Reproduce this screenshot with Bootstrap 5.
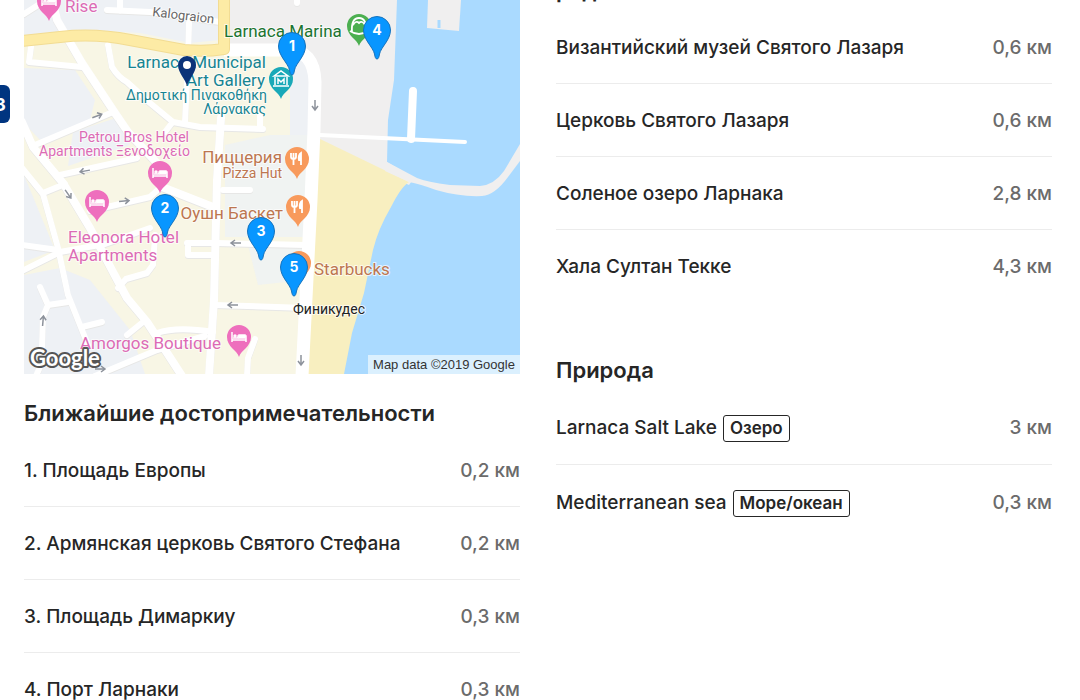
<!DOCTYPE html>
<html lang="ru">
<head>
<meta charset="utf-8">
<meta name="viewport" content="width=device-width, initial-scale=1">
<title>Окрестности отеля</title>
<link href="https://cdn.jsdelivr.net/npm/bootstrap@5.3.0/dist/css/bootstrap.min.css" rel="stylesheet">
<style>
  body { font-family: Inter, "Liberation Sans", sans-serif; font-size: 19px; color: #262626; background: #fff; overflow-x: hidden; }
  .page-area { padding: 0 28px 0 24px; overflow: hidden; }
  .page-area > .row { --bs-gutter-x: 36px; }
  .area-map { display: block; width: 100%; height: auto; font-family: Roboto, sans-serif; }
  .area-map text { paint-order: stroke; stroke: #fff; stroke-opacity: .7; stroke-width: 2px; stroke-linejoin: round; }
  .area-map .pin-num { font: 700 14px Inter, sans-serif; fill: #fff; stroke: none; text-anchor: middle; }
  .area-map .logo-text { font: 700 22px Lato, sans-serif; fill: #fff; stroke: #555; stroke-opacity: 1; stroke-width: 4px; }
  .area-map .credit { font: 13px "Liberation Sans", sans-serif; fill: #333; stroke: none; text-anchor: middle; }
  .area-title { font-size: 22px; line-height: 28px; font-weight: 600; margin: 0 0 8px; }
  .title-map { margin-top: 24px; }
  .title-next { margin-top: 52px; }
  .title-cut { margin-top: -25px; }
  .title-map, .title-next { padding-top: 1px; margin-bottom: 7px; }
  .title-cut { padding-top: 1px; margin-bottom: 7px; }
  .place { height: 73px; padding-top: 2px; border-bottom: 1px solid #ececec; font-weight: 500; }
  .place.tagged { height: 74px; }
  .place:last-child { border-bottom: 0; }
  .place-km { color: #6b6b6b; white-space: nowrap; }
  .place-tag { border: 1px solid #262626; border-radius: 3px; font-size: 17px; line-height: 25px; font-weight: 600; padding: 0 6px; margin-left: 6px; }
  .side-tab { left: -28px; top: 85px; width: 38px; height: 38px; border: 0; border-radius: 6px; background: #003580; color: #fff; font-size: 18px; font-weight: 700; text-align: right; padding: 0 4px; }
</style>
</head>
<body>
<button type="button" class="side-tab position-absolute z-1" aria-label="Оценка">8,3</button>
<main class="page-area">
  <div class="row">
    <section class="col-6">
      <svg class="area-map" viewBox="24 0 496 374" role="img" aria-label="Карта окрестностей">
        <defs>
          <path id="pinBlue" d="M0 29C-1.500 29-2 27-2.500 24C-4 17-13.500 10-13.500 0A13.500 13.500 0 0 1 13.500 0C13.500 10 4 17 2.500 24C2 27 1.500 29 0 29Z" fill="#0896ff" stroke="#1673bd" stroke-width="1"/>
          <path id="pinPoi" d="M0 20C-2 13-12 10-12 0A12 12 0 0 1 12 0C12 10 2 13 0 20Z"/>
          <g id="bed" fill="none" stroke="#fff" stroke-width="1.500"><path d="M-7-5V5M-7 3H7V5M7 3V-1H-1V1H-6"/><path d="M0-2H6V1H0Z" fill="#fff"/><circle cx="-4" cy="-1" r="1"/></g>
          <g id="fork" fill="none" stroke="#fff" stroke-width="1.800"><path d="M-6-6V-2Q-6 0-3.500 0Q-1 0-1-2V-6M-3.500-6V6"/><path d="M4 6V-6Q1-4 2 1H4" fill="#fff"/></g>
          <path id="arrow" d="M-5 0H5M1-3L5 0L1 3" fill="none" stroke="#8d929b" stroke-width="1.500"/>
          <g id="streets" fill="none" stroke-linejoin="round" stroke-linecap="round">
            <g stroke-width="8">
              <path d="M52 -2L57 20L82 63L115 113L128 132L157 163L162 187L213 207"/>
              <path d="M22 122L33 147L63 183L90 228L113 272L127 298L147 322L182 376"/>
              <path d="M221 118L217 180L214 300L209 376"/>
            </g>
            <g stroke-width="6">
              <path d="M108 45L112 67Q118 77 127 82L150 103L173 122L200 127L263 129"/>
              <path d="M189 23L188 60L185 122M107 10L150 12L220 22M120 11V-2M24 14L46 0"/>
              <path d="M31 47L29 62L82 67M35 145L113 112M60 175L137 158M165 132L172 123"/>
              <path d="M22 168L43 194L58 248L68 295L80 325L88 345"/>
              <path d="M43 193L65 184M22 245L58 250M22 271L60 252L105 244L150 228"/>
              <path d="M90 211L150 197L161 187M155 235L153 265L147 273L126 279L118 288"/>
              <path d="M187 243H215M188 243V255H215M216 243L305 245M214 305L306 308"/>
              <path d="M127 335L143 322M157 333Q177 326 213 332M223 190H250M260 116V128"/>
              <path d="M40 287L48 305L68 302M48 305L43 317L42 347M82 327L102 322M95 376L157 350L205 336"/>
              <path d="M255 339L248 358L247 376M36 376L44 358M297 -2V3"/>
            </g>
          </g>
        </defs>
        <rect x="24" width="496" height="374" fill="#aadaff"/>
        <path d="M24 0H320V374H24Z" fill="#f8f6e5"/>
        <g fill="#eef1f5">
          <path d="M24 0H228L220 40L190 43L140 33L90 30L24 36Z"/>
          <path d="M24 68L75 70L95 100L90 120L40 140L24 123Z"/>
          <path d="M73 132L116 118L130 145L68 166Z"/>
          <path d="M24 175L55 250L24 262Z"/>
          <path d="M24 275L60 268L90 280L130 330L145 374H24Z"/>
          <path d="M225 145L270 135H308V237H225ZM248 245L305 248V280L258 285Z" opacity=".75"/>
          <path d="M290 58H309V135H290Z"/>
        </g>
        <path d="M228 0H397L394 80L388 120L387 162L414 178L409 185L320 145L309 52H228Z" fill="#f0efef"/>
        <path d="M318 138L409 182Q401 187 391 207Q378 229 373 250L364 293L352 333L344 374H300Z" fill="#f8efc0"/>
        <path d="M387 162L417 178Q427 182 450 185L480 186Q494 185 504 171L520 144V161L508 177Q495 195 482 196Q460 197 436 190Q420 184 409 182L385 171Z" fill="#f0efef"/>
        <path d="M428 0H461L459 31L427 28Z" fill="#f0efef"/>
        <path d="M439 20V28" stroke="#aadaff" stroke-width="3"/>
        <path d="M320 135L465 142" stroke="#fff" stroke-width="4" stroke-linecap="round"/>
        <path d="M413 91L411 139" stroke="#fff" stroke-width="8" stroke-linecap="round"/>
        <use href="#streets" stroke="#e7e7e6" transform="translate(0 1)"/>
        <use href="#streets" stroke="#fff"/>
        <path d="M224 50H288Q314 50 315 82L314 130L311 200L302 376" fill="none" stroke="#fff" stroke-width="13"/>
        <g fill="none" stroke-linejoin="round">
          <path d="M22 41L60 37Q95 33 130 40L184 50Q205 52 224 49V-2" stroke="#f2dc93" stroke-width="12"/>
          <path d="M22 41L60 37Q95 33 130 40L184 50Q205 52 224 49V-2" stroke="#fdeba5" stroke-width="10"/>
        </g>
        <use href="#arrow" transform="translate(97 116) rotate(-20)"/>
        <use href="#arrow" transform="translate(85 171) rotate(170)"/>
        <use href="#arrow" transform="translate(68 194) rotate(55)"/>
        <use href="#arrow" transform="translate(124 201) rotate(-5)"/>
        <use href="#arrow" transform="translate(236 243) rotate(180)"/>
        <use href="#arrow" transform="translate(233 305) rotate(180)"/>
        <use href="#arrow" transform="translate(43 321) rotate(-85)"/>
        <use href="#arrow" transform="translate(100 369)"/>
        <use href="#arrow" transform="translate(315 105) rotate(90)"/>
        <use href="#arrow" transform="translate(301 360) rotate(90)"/>

        <g fill="#ee6fbd">
          <use href="#pinPoi" x="49" y="1"/><use href="#pinPoi" x="160" y="173"/><use href="#pinPoi" x="97" y="202"/><use href="#pinPoi" x="239" y="337"/>
        </g>
        <use href="#bed" x="49" y="1"/><use href="#bed" x="160" y="173"/><use href="#bed" x="97" y="202"/><use href="#bed" x="239" y="337"/>
        <g fill="#f89a5c"><use href="#pinPoi" x="297" y="159"/><use href="#pinPoi" x="298" y="207"/><use href="#pinPoi" x="299" y="263"/></g>
        <use href="#fork" x="297" y="159"/><use href="#fork" x="298" y="207"/>
        <use href="#pinPoi" x="281" y="79" fill="#19a9b8"/>
        <path d="M274 76L281 71L288 76ZM275 77V85M287 77V85M273 86H289M278 84V79L281 82L284 79V84" fill="none" stroke="#fff" stroke-width="1.500"/>
        <use href="#pinPoi" x="359" y="26" fill="#4caf50"/>
        <path d="M352 32Q351 18 359 18T366 32M353 25Q356 20 359 23Q362 20 365 25M350 31Q359 37 368 31" fill="none" stroke="#fff" stroke-width="1.800"/>

        <text x="65" y="12" font-size="17" fill="#dc6bb5">Rise</text>
        <text x="152" y="16" font-size="13" fill="#666" transform="rotate(7 152 16)">Kalograion</text>
        <text x="224" y="37" font-size="17" fill="#1c7430">Larnaca Marina</text>
        <g fill="#168492" text-anchor="end">
          <text x="266" y="68" font-size="17">Larnaca Municipal</text>
          <text x="265" y="86" font-size="17">Art Gallery</text>
          <text x="267" y="100" font-size="14">Δημοτική Πινακοθήκη</text>
          <text x="266" y="114" font-size="14">Λάρνακας</text>
        </g>
        <g fill="#dc6bb5">
          <text x="189" y="142" font-size="14" text-anchor="end">Petrou Bros Hotel</text>
          <text x="190" y="156" font-size="14" text-anchor="end">Apartments Ξενοδοχείο</text>
          <text x="68" y="243" font-size="17">Eleonora Hotel</text>
          <text x="68" y="261" font-size="17">Apartments</text>
          <text x="80" y="349" font-size="17">Amorgos Boutique</text>
        </g>
        <g fill="#bd7650">
          <text x="282" y="163" font-size="17" text-anchor="end">Пиццерия</text>
          <text x="282" y="178" font-size="14" text-anchor="end">Pizza Hut</text>
          <text x="283" y="219" font-size="17" text-anchor="end">Оушн Баскет</text>
          <text x="314" y="275" font-size="17">Starbucks</text>
        </g>
        <text x="293" y="314" font-size="14" fill="#222">Финикудес</text>

        <path d="M187 86C186 80 178 73 178 65A9 9 0 0 1 196 65C196 73 188 80 187 86Z" fill="#0b3379"/>
        <circle cx="187" cy="65" r="4" fill="#fff"/>
        <use href="#pinBlue" x="292" y="46"/><text class="pin-num" x="292" y="51">1</text>
        <use href="#pinBlue" x="377" y="30"/><text class="pin-num" x="377" y="35">4</text>
        <use href="#pinBlue" x="165" y="208"/><text class="pin-num" x="165" y="213">2</text>
        <use href="#pinBlue" x="261" y="231"/><text class="pin-num" x="261" y="236">3</text>
        <use href="#pinBlue" x="294" y="267"/><text class="pin-num" x="294" y="272">5</text>

        <text class="logo-text" x="30" y="366">Google</text>
        <rect x="368" y="355" width="152" height="19" fill="#e4f3fe" fill-opacity=".85"/>
        <text class="credit" x="444" y="369">Map data ©2019 Google</text>
      </svg>

      <h2 class="area-title title-map">Ближайшие достопримечательности</h2>
      <ul class="list-unstyled mb-0">
        <li class="place d-flex align-items-center justify-content-between"><span>1. Площадь Европы</span><span class="place-km">0,2 км</span></li>
        <li class="place d-flex align-items-center justify-content-between"><span>2. Армянская церковь Святого Стефана</span><span class="place-km">0,2 км</span></li>
        <li class="place d-flex align-items-center justify-content-between"><span>3. Площадь Димаркиу</span><span class="place-km">0,3 км</span></li>
        <li class="place d-flex align-items-center justify-content-between"><span>4. Порт Ларнаки</span><span class="place-km">0,3 км</span></li>
      </ul>
    </section>

    <section class="col-6">
      <h2 class="area-title title-cut">рядом</h2>
      <ul class="list-unstyled mb-0">
        <li class="place d-flex align-items-center justify-content-between"><span>Византийский музей Святого Лазаря</span><span class="place-km">0,6 км</span></li>
        <li class="place d-flex align-items-center justify-content-between"><span>Церковь Святого Лазаря</span><span class="place-km">0,6 км</span></li>
        <li class="place d-flex align-items-center justify-content-between"><span>Соленое озеро Ларнака</span><span class="place-km">2,8 км</span></li>
        <li class="place d-flex align-items-center justify-content-between"><span>Хала Султан Текке</span><span class="place-km">4,3 км</span></li>
      </ul>
      <h2 class="area-title title-next">Природа</h2>
      <ul class="list-unstyled mb-0">
        <li class="place tagged d-flex align-items-center justify-content-between"><span class="d-flex align-items-center">Larnaca Salt Lake <span class="place-tag">Озеро</span></span><span class="place-km">3 км</span></li>
        <li class="place tagged d-flex align-items-center justify-content-between"><span class="d-flex align-items-center">Mediterranean sea <span class="place-tag">Море/океан</span></span><span class="place-km">0,3 км</span></li>
      </ul>
    </section>
  </div>
</main>
<script src="https://cdn.jsdelivr.net/npm/bootstrap@5.3.0/dist/js/bootstrap.bundle.min.js"></script>
</body>
</html>
